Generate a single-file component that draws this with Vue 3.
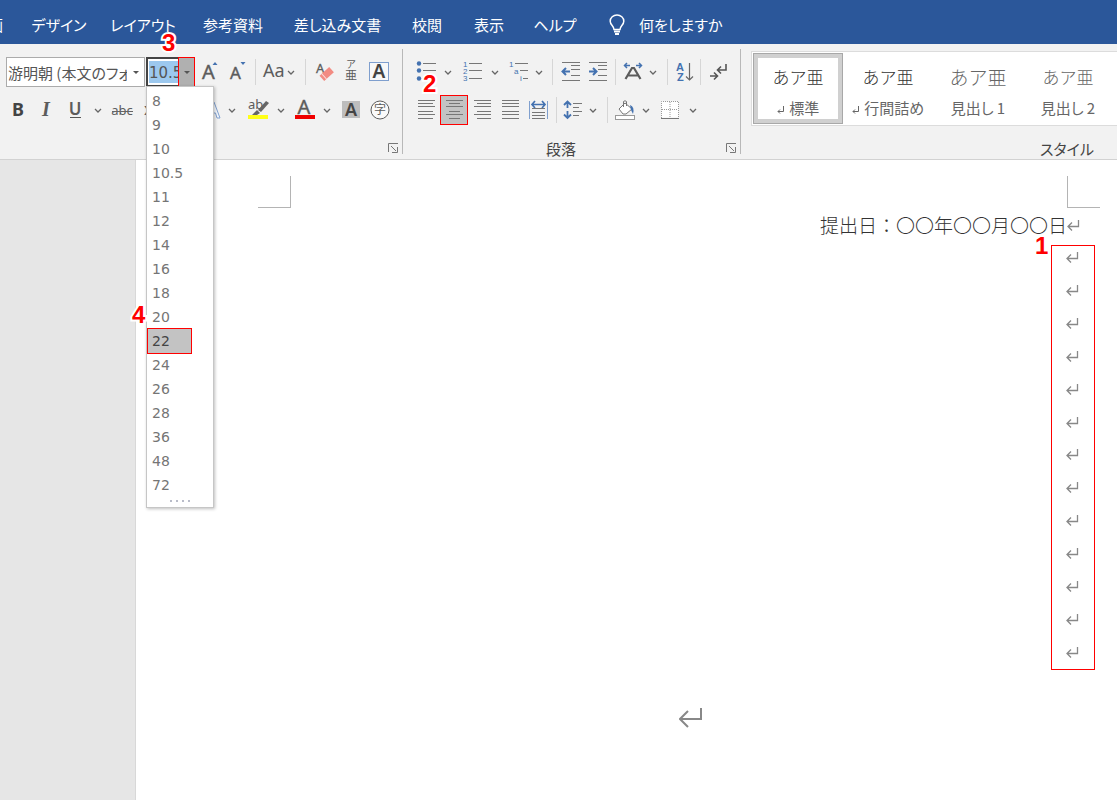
<script setup>
import { ref } from 'vue'

const tabs = ['描画', 'デザイン', 'レイアウト', '参考資料', '差し込み文書', '校閲', '表示', 'ヘルプ']
const sizes = ['8', '9', '10', '10.5', '11', '12', '14', '16', '18', '20', '22', '24', '26', '28', '36', '48', '72']
const selected = ref('22')
const fontName = ref('游明朝 (本文のフォント)')
const fontSize = ref('10.5')
const blankLines = 13

const chev = { icon: 'chevron', label: 'その他のオプション' }
const sep = { sep: true }

const fontTop = [
  { icon: 'grow', label: 'フォント サイズの拡大' },
  { icon: 'shrink', label: 'フォント サイズの縮小' },
  sep,
  { icon: 'case', label: '文字種の変換' },
  chev,
  sep,
  { icon: 'eraser', label: '書式のクリア' },
  { icon: 'ruby', label: 'ルビ' },
  { icon: 'boxed', label: '囲み線' },
]
const fontBottom = [
  { icon: 'bold', label: '太字' },
  { icon: 'italic', label: '斜体' },
  { icon: 'underline', label: '下線' },
  chev,
  { icon: 'strike', label: '取り消し線' },
  { icon: 'sub', label: '下付き' },
  { icon: 'sup', label: '上付き' },
  { icon: 'effect', label: '文字の効果' },
  chev,
  { icon: 'marker', label: '蛍光ペンの色' },
  chev,
  { icon: 'color', label: 'フォントの色' },
  chev,
  { icon: 'shade', label: '文字の網かけ' },
  { icon: 'circled', label: '囲い文字' },
]
const paraTop = [
  { icon: 'bullets', label: '箇条書き' },
  chev,
  { icon: 'numbers', label: '段落番号' },
  chev,
  { icon: 'multilevel', label: 'アウトライン' },
  chev,
  sep,
  { icon: 'outdent', label: 'インデントを減らす' },
  { icon: 'indent', label: 'インデントを増やす' },
  sep,
  { icon: 'scale', label: '拡張書式' },
  chev,
  sep,
  { icon: 'sort', label: '並べ替え' },
  sep,
  { icon: 'marks', label: '編集記号の表示' },
]
const paraBottom = [
  { icon: 'left', label: '左揃え' },
  { icon: 'center', label: '中央揃え', active: true },
  { icon: 'right', label: '右揃え' },
  { icon: 'justify', label: '両端揃え' },
  { icon: 'distribute', label: '均等割り付け' },
  sep,
  { icon: 'spacing', label: '行間' },
  chev,
  sep,
  { icon: 'bucket', label: '塗りつぶし' },
  chev,
  { icon: 'border', label: '罫線' },
  chev,
]
const styles = [
  { name: '標準', mark: true, active: true },
  { name: '行間詰め', mark: true },
  { name: '見出し 1', large: true, light: true },
  { name: '見出し 2', light: true },
]

const G = '#5c5c5c'
const B = '#4472b0'
const line = (x1, x2, y, c = '#777') => `<path d="M${x1} ${y}.5H${x2}" stroke="${c}"/>`
const letter = (s, x, y, size, extra = '') =>
  `<text x="${x}" y="${y}" font-size="${size}" fill="${G}" ${extra}>${s}</text>`
const blue = (s, x, y, size, extra = '') =>
  `<text x="${x}" y="${y}" font-size="${size}" fill="${B}" font-family="Liberation Sans" ${extra}>${s}</text>`
const rows = [-9, -6, -3, 1, 4, 8]
const alignLines = (f) => rows.map((y, i) => line(...f(i % 2), y)).join('')
const arrow = (d, c = B, w = 2) => `<path d="${d}" fill="none" stroke="${c}" stroke-width="${w}"/>`

const icons = {
  chevron: arrow('M-3 -1L0 2L3 -1', '#666', 1.3),
  grow: letter('A', -7, 7, 20, 'stroke="#5c5c5c" stroke-width=".4"') + `<path d="M3.500 -7L6 -10L8.500 -7Z" fill="${B}"/>`,
  shrink: letter('A', -7, 7, 17, 'stroke="#5c5c5c" stroke-width=".4"') + `<path d="M3.500 -10L6 -7L8.500 -10Z" fill="${B}"/>`,
  case: letter('Aa', -9, 5, 18),
  eraser:
    letter('A', -9, 1, 13, 'stroke="#5c5c5c" stroke-width=".3"') +
    '<g transform="translate(1 2) rotate(-42)"><rect x="-6" y="-3" width="13" height="7" fill="#f28b82"/><path d="M-3 -3V4" stroke="#fbe3e0"/></g>',
  ruby: letter('ア', 0, -4, 10, 'text-anchor="middle"') + letter('亜', 0, 8, 12, 'text-anchor="middle"'),
  boxed:
    '<rect x="-9.500" y="-9.500" width="19" height="18" fill="#f8f8f8" stroke="#7f9fce"/>' +
    letter('A', 0, 6, 19, 'text-anchor="middle" font-weight="600" style="fill:#444"'),
  bold: letter('B', 0, 6, 18, 'text-anchor="middle" font-weight="700" style="fill:#444"'),
  italic: letter('I', 0, 6, 20, 'text-anchor="middle" font-style="italic" font-weight="700" font-family="Liberation Serif"'),
  underline: letter('U', 0, 5, 17, 'text-anchor="middle" font-weight="600"') + line(-5, 6, 7, '#555'),
  strike: letter('abc', 0, 5, 13, 'text-anchor="middle"') + line(-10, 11, 1, '#666'),
  sub: letter('x', -5, 5, 16),
  sup: letter('x', -5, 5, 16),
  effect: '<path d="M-4 8L2 -8H4L10 8H7L5.500 3H0.500L-1 8Z" fill="#f5f8fc" stroke="#7fa0d0"/>',
  marker:
    letter('ab', -9, -1, 13) +
    '<path d="M9 -9L12 -7L4 2L1 0Z" fill="#666"/><path d="M-5 5L0 0L3 3L0 5Z" fill="#666"/>' +
    '<rect x="-9" y="5" width="20" height="4" fill="#ffff18"/>',
  color:
    letter('A', 0, 4, 20, 'text-anchor="middle" stroke="#5c5c5c" stroke-width=".4"') +
    '<rect x="-9" y="5" width="20" height="4" fill="#f00000"/>',
  shade:
    '<rect x="-9" y="-9" width="18" height="17" fill="#bdbdbd"/>' +
    letter('A', 0, 6, 18, 'text-anchor="middle" font-weight="600" style="fill:#444"'),
  circled: `<circle r="9" fill="#fafafa" stroke="${G}"/>` + letter('字', 0, 4, 12, 'text-anchor="middle"'),
  bullets: [-8, -1, 6].map((y) => `<circle cx="-7" cy="${y}.5" r="2.200" fill="${B}"/>` + line(-3, 10, y)).join(''),
  numbers: [-8, -1, 6].map((y, i) => blue(i + 1, -9, y + 3, 8) + line(-3, 10, y)).join(''),
  multilevel:
    blue('1', -8, -5, 8) + blue('a', -3, 2, 8) + blue('i', 3, 9, 8) +
    line(-2, 11, -8) + line(3, 11, -1) + line(6, 11, 6),
  outdent:
    line(-9, 9, -9) + line(0, 9, -6) + line(0, 9, -2) + line(0, 9, 3) + line(-9, 9, 8) +
    arrow('M-1 -.5H-8M-5 -4L-8.500 -.5L-5 3'),
  indent:
    line(-9, 9, -9) + line(0, 9, -6) + line(0, 9, -2) + line(0, 9, 3) + line(-9, 9, 8) +
    arrow('M-9 -.5H-2M-5 -4L-1.500 -.5L-5 3'),
  scale:
    arrow('M-7.500 7L-1 -4H1L7.500 7M-5 3.500H5', G, 2.2) +
    arrow('M-3 -6.500H-8M-6 -9L-8.500 -6.500L-6 -4M3 -6.500H8M6 -9L8.500 -6.500L6 -4', B, 1.5),
  sort:
    blue('A', -9, -1, 11, 'font-weight="700"') + blue('Z', -8, 9, 11, 'font-weight="700"') +
    arrow('M4.500 -9V8M1 4.500L4.500 8L8 4.500', '#666', 1.2),
  marks:
    arrow('M8 -8V-2H0M3 -5.500L-.5 -2L3 1.500', '#555', 1.6) + arrow('M-8 4H-1M-4 .5L-.5 4L-4 7.500', '#555', 1.6),
  left: alignLines((n) => [-8, n ? 7 : 9]),
  center: alignLines((n) => (n ? [-5, 6] : [-8, 9])),
  right: alignLines((n) => (n ? [-5, 9] : [-8, 9])),
  justify: alignLines(() => [-8, 9]),
  distribute:
    `<path d="M-8.500 -9V9M9.500 -9V9" stroke="#7f9fce"/>` +
    arrow('M-5 -5.500H6M-3 -9L-6 -5.500L-3 -2M4 -9L7 -5.500L4 -2', B, 1.7) +
    line(-6, 7, -1) + line(-6, 7, 2) + line(-6, 7, 5) + line(-6, 7, 8),
  spacing:
    arrow('M-5.500 -8V-2M-9 -5L-5.500 -8.500L-2 -5M-5.500 1V8M-9 4.500L-5.500 8L-2 4.500', B, 1.8) +
    line(0, 9, -6) + line(0, 6, -2) + line(0, 9, 1) + line(0, 6, 5),
  bucket:
    '<path d="M-6 -1L0 -7L7 -1L1 4H-2Z" fill="#fff" stroke="#777"/><path d="M-1.500 -3V-8.500Q0 -10 1.500 -8.500V-4" fill="none" stroke="#777"/>' +
    `<path d="M5 -5Q10 -3 8 4L6 0Z" fill="${B}"/>` +
    '<rect x="-9.500" y="5.500" width="19" height="4" fill="#fff" stroke="#999"/>',
  border:
    '<rect x="-8.500" y="-8.500" width="17" height="16" fill="#fff"/><path d="M-8.500 8V-8.500H8.500V8M0 -8V8M-8 -.5H8" fill="none" stroke="#999" stroke-dasharray="1 1"/>' +
    line(-9, 9, 8),
}
</script>

<template>
  <div class="app">
    <nav class="tabs">
      <a v-for="t in tabs" :key="t" href="#" class="tab"><span>{{ t }}</span></a>
      <svg class="bulb" width="18" height="22" viewBox="0 0 18 22" fill="none" stroke="#fff" stroke-width="1.5">
        <path d="M6 15.500C6 12 2.200 11 2.200 7.200A6.800 6.200 0 0 1 15.800 7.200C15.800 11 12 12 12 15.500Z" />
        <path d="M6 17.500H12M7 20H11" stroke-width="2" />
      </svg>
      <a href="#" class="tab ask"><span>何をしますか</span></a>
    </nav>

    <header class="ribbon">
      <section class="group font-group" aria-label="フォント">
        <div class="tools font-top">
          <div class="combo">
            <input v-model="fontName" type="text" aria-label="フォント名" />
            <button type="button" class="drop" aria-label="フォントの一覧"><i class="tri"></i></button>
          </div>
          <div class="combo size">
            <input v-model="fontSize" type="text" aria-label="フォント サイズ" />
            <button type="button" class="drop hot" aria-label="サイズの一覧"><i class="tri"></i></button>
            <b class="step step3">3</b>
            <div class="menu">
              <ul role="listbox" aria-label="フォント サイズの候補">
                <li v-for="s in sizes" :key="s" role="option" :aria-selected="s === selected">
                  <button type="button" :class="{ picked: s === selected }" @click="selected = s">{{ s }}</button>
                  <b v-if="s === '22'" class="step step4">4</b>
                </li>
              </ul>
              <div class="grip"><i></i><i></i><i></i><i></i></div>
            </div>
          </div>
          <template v-for="(t, i) in fontTop" :key="i">
            <i v-if="t.sep" class="sep"></i>
            <button v-else type="button" class="tool" :aria-label="t.label">
              <svg width="28" height="24" viewBox="-14 -12 28 24" v-html="icons[t.icon]"></svg>
            </button>
          </template>
        </div>
        <div class="tools font-bottom">
          <button v-for="(t, i) in fontBottom" :key="i" type="button" class="tool" :aria-label="t.label">
            <svg width="28" height="24" viewBox="-14 -12 28 24" v-html="icons[t.icon]"></svg>
          </button>
        </div>
        <footer class="caption">
          <button type="button" class="launcher" aria-label="フォントの設定">
            <svg width="11" height="11" viewBox="0 0 11 11" fill="none" stroke="#777"><path d="M.5 9V.5H10M3 3L8 8M9.500 4V9.500H4" /></svg>
          </button>
        </footer>
      </section>

      <section class="group para-group" aria-label="段落">
        <b class="step step2">2</b>
        <div class="tools para-top">
          <template v-for="(t, i) in paraTop" :key="i">
            <i v-if="t.sep" class="sep"></i>
            <button v-else type="button" class="tool" :aria-label="t.label">
              <svg width="28" height="24" viewBox="-14 -12 28 24" v-html="icons[t.icon]"></svg>
            </button>
          </template>
        </div>
        <div class="tools para-bottom">
          <template v-for="(t, i) in paraBottom" :key="i">
            <i v-if="t.sep" class="sep"></i>
            <button v-else type="button" class="tool" :class="{ active: t.active }" :aria-label="t.label">
              <svg width="28" height="24" viewBox="-14 -12 28 24" v-html="icons[t.icon]"></svg>
            </button>
          </template>
        </div>
        <footer class="caption">
          <span>段落</span>
          <button type="button" class="launcher" aria-label="段落の設定">
            <svg width="11" height="11" viewBox="0 0 11 11" fill="none" stroke="#777"><path d="M.5 9V.5H10M3 3L8 8M9.500 4V9.500H4" /></svg>
          </button>
        </footer>
      </section>

      <section class="group style-group" aria-label="スタイル">
        <div class="gallery">
          <button v-for="s in styles" :key="s.name" type="button" class="card" :class="{ current: s.active }">
            <span class="sample" :class="{ large: s.large, light: s.light }">あア亜</span>
            <span class="name">
              <svg v-if="s.mark" width="7" height="8" viewBox="0 0 7 8" fill="none" stroke="#666"><path d="M6.500 0V5.500H1M3 3.500L1 5.500L3 7.500" /></svg>
              {{ s.name }}
            </span>
          </button>
        </div>
        <footer class="caption"><span>スタイル</span></footer>
      </section>
    </header>

    <main class="workspace">
      <article class="page">
        <div class="crops"><i class="crop lead"></i><i class="crop trail"></i></div>
        <div class="body">
          <p class="date">
            提出日：〇〇年〇〇月〇〇日
            <svg class="mark" width="14" height="12" viewBox="0 0 14 12" fill="none" stroke="#888" stroke-width="1.300"><path d="M11.500 0V6.500H1M5 2.500L1 6.500L5 10.500" /></svg>
          </p>
          <div class="blank">
            <b class="step step1">1</b>
            <svg v-for="n in blankLines" :key="n" width="14" height="12" viewBox="0 0 14 12" fill="none" stroke="#888" stroke-width="1.300"><path d="M11.500 0V6.500H1M5 2.500L1 6.500L5 10.500" /></svg>
          </div>
          <p class="title">
            <svg width="24" height="20" viewBox="0 0 24 20" fill="none" stroke="#888" stroke-width="2"><path d="M22 0V11H1M9 3L1 11L9 19" /></svg>
          </p>
        </div>
      </article>
    </main>
  </div>
</template>

<style>
body {
  margin: 0;
}
</style>

<style scoped>
.app {
  display: flex;
  flex-direction: column;
  min-height: 100vh;
  overflow: hidden;
  background: #fff;
  color: #444;
  font-family: 'Noto Sans', 'Noto Sans CJK JP', sans-serif;
  font-size: 15px;
}
button {
  padding: 0;
  border: 0;
  background: none;
  color: inherit;
  font: inherit;
}
.tabs {
  display: grid;
  grid-template-columns: 3px 48px 56px 60px 85px 30px 30px 38px 20px 76px;
  column-gap: 32px;
  align-items: center;
  height: 44px;
  padding-top: 6px;
  box-sizing: border-box;
  background: #2b579a;
}
.bulb {
  justify-self: end;
}
.tab {
  display: flex;
  justify-content: center;
  color: #fff;
  font-family: 'Noto Sans CJK JP', sans-serif;
  font-feature-settings: 'palt';
  line-height: 24px;
  text-decoration: none;
  white-space: nowrap;
}
.tab:first-child {
  justify-content: flex-end;
}
.ask {
  justify-content: flex-start;
  margin-left: -19px;
}
.ribbon {
  display: flex;
  border-bottom: 1px solid #d2d2d2;
  background: #f2f2f2;
}
.group {
  position: relative;
  display: flex;
  flex-direction: column;
  gap: 8px;
  padding-top: 13px;
}
.font-group,
.para-group {
  flex: none;
}
.font-group::after,
.para-group::after {
  content: '';
  position: absolute;
  top: 5px;
  right: 0;
  bottom: 5px;
  width: 1px;
  background: #b8b8b8;
}
.font-group {
  width: 403px;
}
.para-group {
  width: 338px;
}
.style-group {
  flex: 1;
  min-width: 0;
  padding-top: 7px;
  gap: 12px;
}
.tools {
  display: grid;
  height: 30px;
  align-items: center;
}
.font-top {
  padding-left: 6px;
  grid-template-columns: 140px 49px 28px 28px 8px 26px 12px 16px 24px 28px 28px;
}
.font-bottom {
  padding-left: 4px;
  grid-template-columns: 28px 28px 30px 16px 32px 22px 36px 28px 16px 34px 14px 32px 14px 34px 24px;
}
.para-top {
  padding-left: 9px;
  grid-template-columns: 28px 16px 32px 14px 30px 14px 12px 26px 28px 6px 30px 10px 18px 18px 12px 24px;
}
.para-bottom {
  padding-left: 9px;
  grid-template-columns: 28px 28px 28px 28px 28px 8px 26px 14px 14px 22px 20px 28px 18px;
}
.tool {
  display: flex;
  align-items: center;
  justify-content: center;
  height: 30px;
  min-width: 0;
}
.tool svg {
  flex: none;
  overflow: visible;
}
.tool.active {
  box-sizing: border-box;
  border: 1px solid #f00;
  background: #c3c3c3;
}
.sep {
  justify-self: center;
  width: 1px;
  height: 26px;
  background: #d6d6d6;
}
.combo {
  position: relative;
  display: flex;
  box-sizing: border-box;
  width: 139px;
  height: 30px;
  border: 1px solid #ababab;
  background: #fff;
}
.combo input {
  flex: 1;
  min-width: 0;
  padding: 0 0 0 1px;
  border: 0;
  outline: 0;
  background: #fff;
  color: #555;
  font: 15px 'Noto Sans CJK JP', sans-serif;
  font-feature-settings: 'palt';
}
.drop {
  display: flex;
  align-items: center;
  justify-content: center;
  width: 17px;
}
.tri {
  border: 3px solid transparent;
  border-top-color: #555;
  border-bottom: 0;
}
.combo.size {
  width: 49px;
  border: 2px solid #444;
  border-right: 0;
}
.combo.size input {
  margin: 2px 0 2px 1px;
  padding: 2px 0 0;
  background: #9cc8ee;
  font: 15px 'DejaVu Sans', sans-serif;
}
.hot {
  margin: -2px 0;
  box-sizing: border-box;
  border: 1px solid #f00;
  background: #b0b0b0;
}
.menu {
  position: absolute;
  z-index: 5;
  top: 27px;
  left: -2px;
  width: 66px;
  padding: 2px 0 5px;
  border: 1px solid #c6c6c6;
  background: #fff;
  box-shadow: 1px 1px 3px rgba(0, 0, 0, 0.25);
}
.menu ul {
  margin: 0;
  padding: 0;
  list-style: none;
}
.menu li {
  position: relative;
}
.menu button {
  display: block;
  width: 43px;
  height: 24px;
  margin-left: 1px;
  padding-left: 4px;
  color: #757575;
  font: 14px/24px 'DejaVu Sans', sans-serif;
  text-align: left;
}
.menu .picked {
  outline: 1px solid #f00;
  background: #c3c3c3;
  color: #444;
}
.grip {
  display: flex;
  justify-content: center;
  gap: 4px;
  padding-top: 3px;
}
.grip i {
  width: 2px;
  height: 2px;
  background: #b9bcc9;
}
.caption {
  display: flex;
  align-items: center;
  justify-content: center;
  height: 21px;
  margin-top: 5px;
  font-family: 'Noto Sans CJK JP', sans-serif;
  font-feature-settings: 'palt';
}
.para-group .caption {
  padding-right: 22px;
}
.style-group .caption {
  margin-top: 0;
  padding-left: 276px;
}
.launcher {
  position: absolute;
  right: 4px;
  bottom: 5px;
  display: flex;
}
.gallery {
  display: flex;
  margin-left: 10px;
  padding: 1px;
  border: 1px solid #dcdcdc;
  border-right: 0;
  background: #fff;
}
.card {
  display: flex;
  flex: none;
  flex-direction: column;
  align-items: center;
  justify-content: center;
  gap: 7px;
  box-sizing: border-box;
  width: 90px;
  height: 71px;
  padding-top: 8px;
  color: #666;
  font-family: 'Noto Sans CJK JP', sans-serif;
}
.current {
  border: 1px solid #a8a8a8;
  box-shadow: inset 0 0 0 4px #d0d0d0;
}
.sample {
  color: #333;
  font-size: 17px;
  font-weight: 300;
  line-height: 24px;
}
.light {
  color: #666;
}
.large {
  font-size: 19px;
}
.name {
  font-feature-settings: 'palt';
  line-height: 24px;
  white-space: nowrap;
}
.name svg {
  margin-right: 2px;
}
.step {
  position: absolute;
  z-index: 6;
  color: #f00;
  font: 700 24px/24px 'Liberation Sans', sans-serif;
  -webkit-text-stroke: 4px #fff;
  paint-order: stroke fill;
}
.step3 {
  top: -28px;
  left: 14px;
}
.step2 {
  top: 28px;
  left: 20px;
}
.step4 {
  top: -26px;
  left: -15px;
}
.step1 {
  top: -12px;
  left: -17px;
}
.workspace {
  display: flex;
  flex: 1;
  padding-left: 135px;
  background: #e6e6e6;
}
.page {
  flex: 1;
  min-width: 0;
  border-left: 1px solid #d8d8d8;
  background: #fff;
}
.crops {
  display: flex;
  justify-content: space-between;
  padding: 16px 17px 0 122px;
}
.crop {
  width: 32px;
  height: 31px;
  border: 0 solid #b4b4b4;
  border-bottom-width: 1px;
}
.lead {
  border-right-width: 1px;
}
.trail {
  border-left-width: 1px;
}
.body {
  margin: 0 50px 0 155px;
}
.date {
  position: relative;
  margin: 0;
  color: #333;
  font: 300 19px/34px 'Noto Sans CJK JP', sans-serif;
  text-align: right;
}
.date .mark {
  position: absolute;
  top: 12px;
  left: 100%;
}
.blank {
  position: relative;
  display: flex;
  flex-direction: column;
  align-items: center;
  justify-content: space-between;
  box-sizing: border-box;
  width: 44px;
  height: 425px;
  margin: 3px -28px 0 auto;
  padding: 6px 0 10px;
  border: 1px solid #f00;
}
.title {
  display: flex;
  align-items: center;
  height: 96px;
  margin: 0;
  padding-left: 50%;
}
</style>
